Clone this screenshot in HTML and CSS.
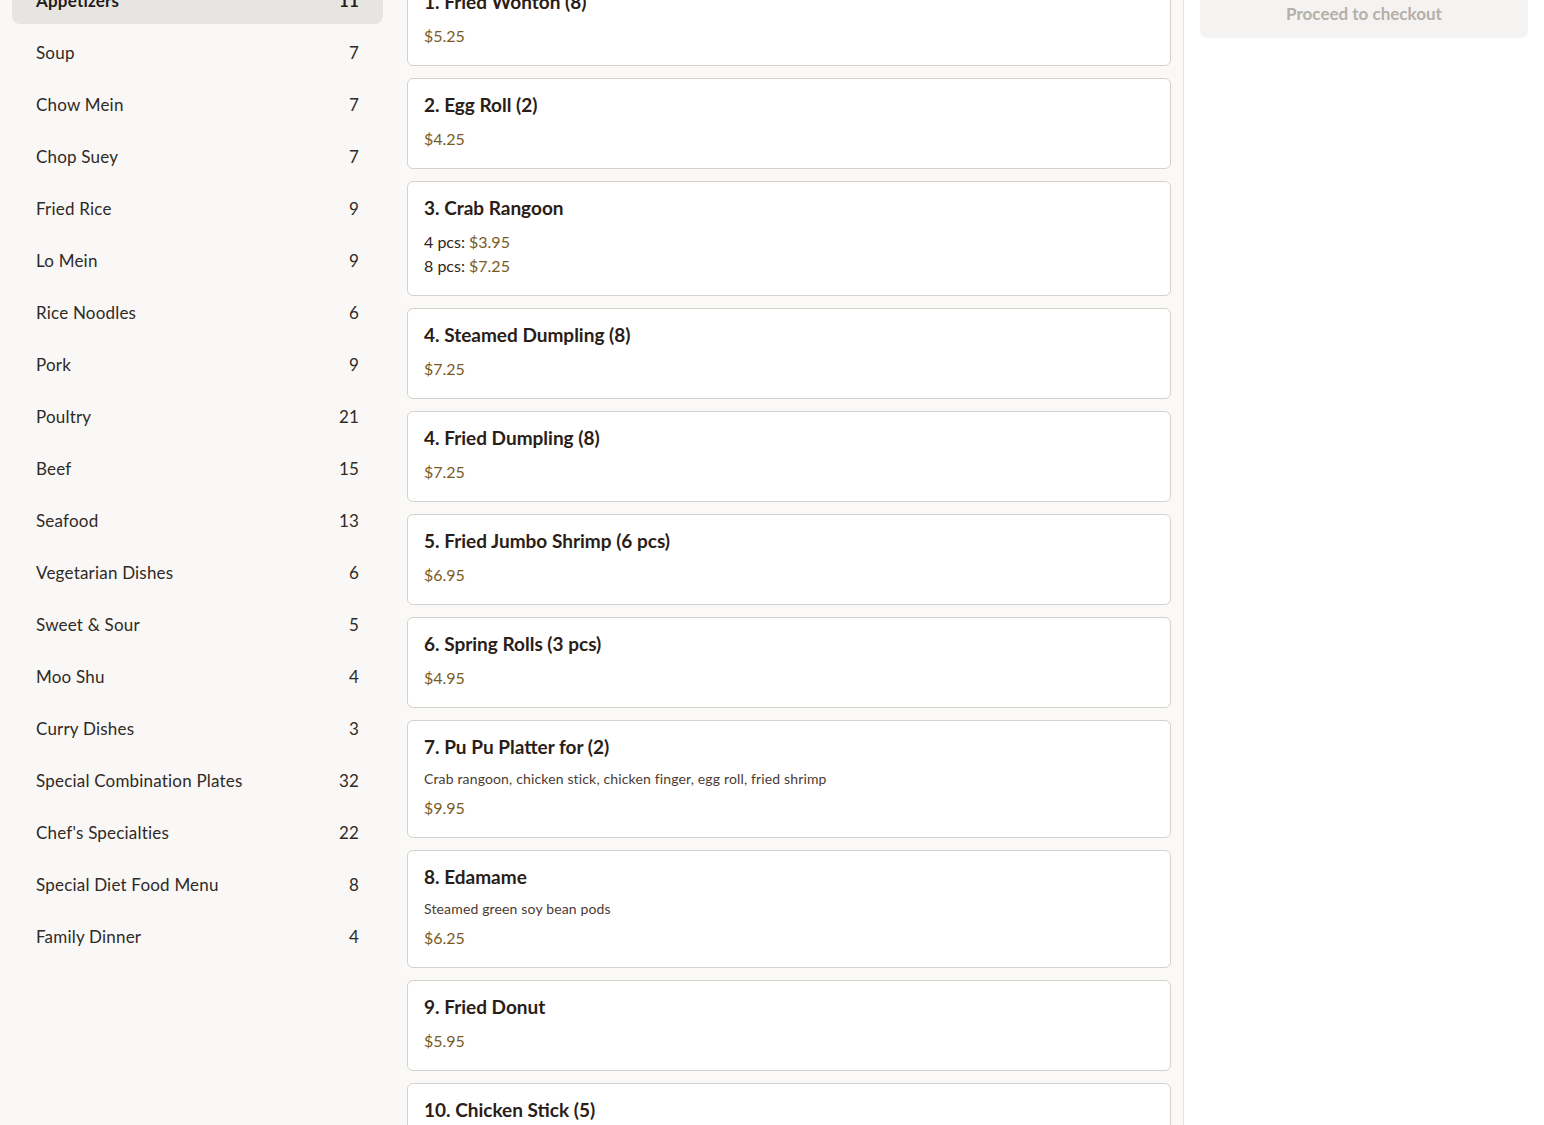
FILE: index.html
```html
<!DOCTYPE html>
<html lang="en">
<head>
<meta charset="utf-8">
<title>Menu</title>
<link rel="stylesheet" href="styles.css">
</head>
<body>
<div class="page">
  <aside class="sidebar">
    <nav class="cat-list">
      <a class="cat active"><span>Appetizers</span><span class="count">11</span></a>
      <a class="cat"><span>Soup</span><span class="count">7</span></a>
      <a class="cat"><span>Chow Mein</span><span class="count">7</span></a>
      <a class="cat"><span>Chop Suey</span><span class="count">7</span></a>
      <a class="cat"><span>Fried Rice</span><span class="count">9</span></a>
      <a class="cat"><span>Lo Mein</span><span class="count">9</span></a>
      <a class="cat"><span>Rice Noodles</span><span class="count">6</span></a>
      <a class="cat"><span>Pork</span><span class="count">9</span></a>
      <a class="cat"><span>Poultry</span><span class="count">21</span></a>
      <a class="cat"><span>Beef</span><span class="count">15</span></a>
      <a class="cat"><span>Seafood</span><span class="count">13</span></a>
      <a class="cat"><span>Vegetarian Dishes</span><span class="count">6</span></a>
      <a class="cat"><span>Sweet &amp; Sour</span><span class="count">5</span></a>
      <a class="cat"><span>Moo Shu</span><span class="count">4</span></a>
      <a class="cat"><span>Curry Dishes</span><span class="count">3</span></a>
      <a class="cat"><span>Special Combination Plates</span><span class="count">32</span></a>
      <a class="cat"><span>Chef's Specialties</span><span class="count">22</span></a>
      <a class="cat"><span>Special Diet Food Menu</span><span class="count">8</span></a>
      <a class="cat"><span>Family Dinner</span><span class="count">4</span></a>
    </nav>
  </aside>

  <main class="menu">
    <div class="card">
      <h3 class="title">1. Fried Wonton (8)</h3>
      <div class="price-line"><span class="price">$5.25</span></div>
    </div>
    <div class="card">
      <h3 class="title">2. Egg Roll (2)</h3>
      <div class="price-line"><span class="price">$4.25</span></div>
    </div>
    <div class="card">
      <h3 class="title">3. Crab Rangoon</h3>
      <div class="price-line">4 pcs: <span class="price">$3.95</span></div>
      <div class="price-line">8 pcs: <span class="price">$7.25</span></div>
    </div>
    <div class="card">
      <h3 class="title">4. Steamed Dumpling (8)</h3>
      <div class="price-line"><span class="price">$7.25</span></div>
    </div>
    <div class="card">
      <h3 class="title">4. Fried Dumpling (8)</h3>
      <div class="price-line"><span class="price">$7.25</span></div>
    </div>
    <div class="card">
      <h3 class="title">5. Fried Jumbo Shrimp (6 pcs)</h3>
      <div class="price-line"><span class="price">$6.95</span></div>
    </div>
    <div class="card">
      <h3 class="title">6. Spring Rolls (3 pcs)</h3>
      <div class="price-line"><span class="price">$4.95</span></div>
    </div>
    <div class="card">
      <h3 class="title">7. Pu Pu Platter for (2)</h3>
      <p class="desc">Crab rangoon, chicken stick, chicken finger, egg roll, fried shrimp</p>
      <div class="price-line"><span class="price">$9.95</span></div>
    </div>
    <div class="card">
      <h3 class="title">8. Edamame</h3>
      <p class="desc">Steamed green soy bean pods</p>
      <div class="price-line"><span class="price">$6.25</span></div>
    </div>
    <div class="card">
      <h3 class="title">9. Fried Donut</h3>
      <div class="price-line"><span class="price">$5.95</span></div>
    </div>
    <div class="card">
      <h3 class="title">10. Chicken Stick (5)</h3>
      <div class="price-line"><span class="price">$6.95</span></div>
    </div>
  </main>

  <aside class="cart">
    <button class="checkout" disabled>Proceed to checkout</button>
  </aside>
</div>
</body>
</html>
```

FILE: styles.css
```css
* {
  box-sizing: border-box;
}

html, body {
  margin: 0;
  padding: 0;
  height: 100%;
  overflow: hidden;
}

body {
  font-family: "Lato", "Noto Sans", sans-serif;
  background: #faf9f7;
  color: #2e2622;
}

.page {
  display: grid;
  grid-template-columns: 395px 789px 1fr;
  margin-top: -40px;
  min-height: calc(100vh + 40px);
}

/* Sidebar */
.sidebar {
  background: #f9f8f6;
  padding: 16px 12px;
}

.cat-list {
  display: flex;
  flex-direction: column;
  gap: 4px;
}

.cat {
  display: flex;
  align-items: center;
  justify-content: space-between;
  height: 48px;
  padding: 0 24px;
  border-radius: 8px;
  font-size: 17px;
  letter-spacing: 0.2px;
  color: #2f2a26;
  cursor: pointer;
}

.cat.active {
  background: #e7e5e1;
  font-weight: 700;
  color: #231c18;
}

/* Menu */
.menu {
  padding: 15px 12px 0;
  border-right: 1px solid #e6e3de;
  display: flex;
  flex-direction: column;
  gap: 12px;
  overflow: hidden;
}

.card {
  background: #ffffff;
  border: 1px solid #d5d2cd;
  border-radius: 6px;
  padding: 16px 16px 17px;
  flex-shrink: 0;
}

.title {
  margin: 0 0 13px;
  font-size: 19px;
  line-height: 19px;
  font-weight: 700;
  color: #2b1d17;
}

.desc {
  margin: 0 0 7px;
  font-size: 14px;
  line-height: 20px;
  letter-spacing: 0.15px;
  color: #4b3b34;
}

.price-line {
  font-size: 16px;
  line-height: 24px;
  color: #2f2520;
}

.price {
  color: #7a5b24;
}

/* Cart */
.cart {
  background: #ffffff;
  padding: 28px 16px 16px;
}

.checkout {
  display: block;
  width: 100%;
  height: 50px;
  border: none;
  border-radius: 8px;
  background: #f4f3f1;
  color: #b4afa9;
  font-family: inherit;
  font-size: 17px;
  font-weight: 700;
}
```
